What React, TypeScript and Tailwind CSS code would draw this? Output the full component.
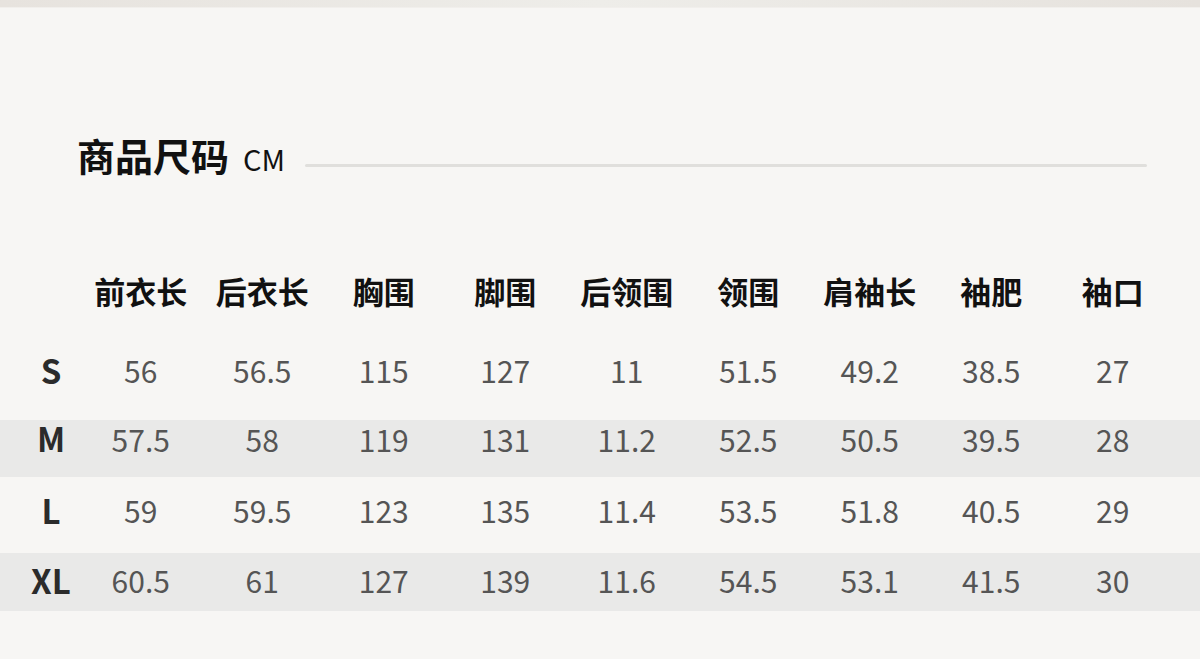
import React from "react";

const heads = ["前衣长", "后衣长", "胸围", "脚围", "后领围", "领围", "肩袖长", "袖肥", "袖口"];
const rows: { size: string; vals: string[]; cls: string }[] = [
  { size: "S", vals: ["56", "56.5", "115", "127", "11", "51.5", "49.2", "38.5", "27"], cls: "h-[76px] pb-[24px]" },
  { size: "M", vals: ["57.5", "58", "119", "131", "11.2", "52.5", "50.5", "39.5", "28"], cls: "h-[57px] pb-[20px] bg-[#e9e9e8]" },
  { size: "L", vals: ["59", "59.5", "123", "135", "11.4", "53.5", "51.8", "40.5", "29"], cls: "h-[76px] pb-[10px]" },
  { size: "XL", vals: ["60.5", "61", "127", "139", "11.6", "54.5", "53.1", "41.5", "30"], cls: "h-[58px] pb-[4px] bg-[#e9e9e8]" },
];

const font = { fontFamily: '"Noto Sans CJK SC", "Noto Sans", sans-serif' };

export default function App() {
  return (
    <div className="w-[1200px] h-[659px] bg-[#f7f6f4] overflow-hidden" style={font}>
      <div className="h-[7px] bg-gradient-to-r from-[#e7e3de] via-[#eeede9] to-[#e6e2dd]" />
      <div className="h-[1px] bg-[#f1efec]" />
      <div className="mt-[127px] h-[40px] flex items-center pl-[77px] pr-[53px]">
        <div className="flex items-baseline">
          <span className="text-[38px] leading-none font-semibold text-[#111]">商品尺码</span>
          <span className="ml-[14px] text-[29px] leading-none text-[#111]">CM</span>
        </div>
        <div className="flex-1 ml-[20px] mt-[20px] h-[3px] rounded-full bg-[#e0dfdc]" />
      </div>
      <div className="mt-[95px] h-[40px] flex items-center pl-[22px]">
        <div className="w-[58px]" />
        {heads.map((h) => (
          <div key={h} className="w-[121.5px] text-center text-[31px] leading-none font-semibold text-[#111]">
            {h}
          </div>
        ))}
      </div>
      <div className="mt-[34px]">
        {rows.map((r) => (
          <div key={r.size} className={`flex items-center pl-[22px] ${r.cls}`}>
            <div className="w-[58px] text-center text-[33px] leading-none font-semibold text-[#2b2b2b]">{r.size}</div>
            {r.vals.map((v, i) => (
              <div key={i} className="w-[121.5px] text-center text-[30px] leading-none font-normal text-[#555]">
                {v}
              </div>
            ))}
          </div>
        ))}
      </div>
    </div>
  );
}
